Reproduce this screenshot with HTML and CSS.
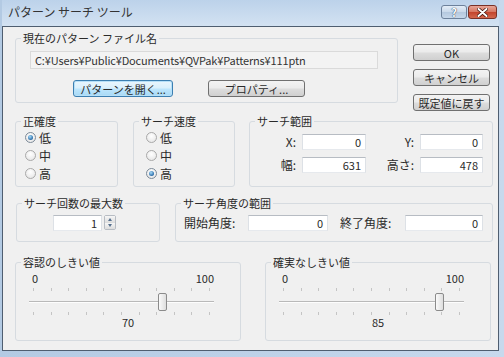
FILE: index.html
```html
<!DOCTYPE html>
<html lang="ja">
<head>
    <meta charset="UTF-8">
    <title>パターン サーチ ツール</title>
    <link rel="stylesheet" href="styles.css">
</head>
<body>

<div class="window">

    <!-- Title bar -->
    <div class="titlebar">
        <span class="title">パターン サーチ ツール</span>
        <div class="caption-buttons">
            <span class="cap-btn help">?</span>
            <span class="cap-btn close">
                <svg width="11" height="9" viewBox="0 0 11 9">
                    <path d="M1.5 1 L9.5 8 M9.5 1 L1.5 8" stroke="#3a0d05" stroke-width="3.4" stroke-linecap="round"/>
                    <path d="M1.5 1 L9.5 8 M9.5 1 L1.5 8" stroke="#fff" stroke-width="2" stroke-linecap="round"/>
                </svg>
            </span>
        </div>
    </div>

    <div class="client">

        <!-- File + dialog buttons -->
        <div class="row row-file">
            <fieldset class="group group-file">
                <legend>現在のパターン ファイル名</legend>
                <div class="path-field">C:¥Users¥Public¥Documents¥QVPak¥Patterns¥111ptn</div>
                <div class="file-buttons">
                    <button class="btn btn-default btn-open">パターンを開く...</button>
                    <button class="btn btn-props">プロパティ...</button>
                </div>
            </fieldset>
            <div class="side-buttons">
                <button class="btn">OK</button>
                <button class="btn">キャンセル</button>
                <button class="btn">既定値に戻す</button>
            </div>
        </div>

        <!-- Accuracy / speed / range -->
        <div class="row row-options">
            <fieldset class="group group-accuracy">
                <legend>正確度</legend>
                <div class="option"><span class="radio checked"></span>低</div>
                <div class="option"><span class="radio"></span>中</div>
                <div class="option"><span class="radio"></span>高</div>
            </fieldset>
            <fieldset class="group group-speed">
                <legend>サーチ速度</legend>
                <div class="option"><span class="radio"></span>低</div>
                <div class="option"><span class="radio"></span>中</div>
                <div class="option"><span class="radio checked"></span>高</div>
            </fieldset>
            <fieldset class="group group-range">
                <legend>サーチ範囲</legend>
                <div class="range-grid">
                    <span class="field-label">X:</span>
                    <span class="field">0</span>
                    <span class="field-label">Y:</span>
                    <span class="field">0</span>
                    <span class="field-label">幅:</span>
                    <span class="field">631</span>
                    <span class="field-label">高さ:</span>
                    <span class="field">478</span>
                </div>
            </fieldset>
        </div>

        <!-- Count / angle -->
        <div class="row row-count">
            <fieldset class="group group-count">
                <legend>サーチ回数の最大数</legend>
                <div class="spinner">
                    <span class="field spin-field">1</span>
                    <span class="spin-buttons">
                        <span class="spin up"></span>
                        <span class="spin down"></span>
                    </span>
                </div>
            </fieldset>
            <fieldset class="group group-angle">
                <legend>サーチ角度の範囲</legend>
                <div class="angle-row">
                    <span class="angle-label">開始角度:</span>
                    <span class="field angle-start">0</span>
                    <span class="angle-label angle-end-label">終了角度:</span>
                    <span class="field angle-end">0</span>
                </div>
            </fieldset>
        </div>

        <!-- Threshold sliders -->
        <div class="row row-sliders">
            <fieldset class="group group-slider">
                <legend>容認のしきい値</legend>
                <div class="slider-body">
                    <div class="scale"><span>0</span><span>100</span></div>
                    <div class="slider">
                        <div class="ticks ticks-top">
                            <i></i><i></i><i></i><i></i><i></i><i></i><i></i><i></i><i></i><i></i><i></i>
                        </div>
                        <div class="track"></div>
                        <div class="ticks ticks-bottom">
                            <i></i><i></i><i></i><i></i><i></i><i></i><i></i><i></i><i></i><i></i><i></i>
                        </div>
                        <div class="thumb" style="left: 70%"></div>
                    </div>
                </div>
                <div class="slider-value">70</div>
            </fieldset>
            <fieldset class="group group-slider">
                <legend>確実なしきい値</legend>
                <div class="slider-body">
                    <div class="scale"><span>0</span><span>100</span></div>
                    <div class="slider">
                        <div class="ticks ticks-top">
                            <i></i><i></i><i></i><i></i><i></i><i></i><i></i><i></i><i></i><i></i><i></i>
                        </div>
                        <div class="track"></div>
                        <div class="ticks ticks-bottom">
                            <i></i><i></i><i></i><i></i><i></i><i></i><i></i><i></i><i></i><i></i><i></i>
                        </div>
                        <div class="thumb" style="left: 85%"></div>
                    </div>
                </div>
                <div class="slider-value">85</div>
            </fieldset>
        </div>

    </div>
</div>

</body>
</html>
```

FILE: styles.css
```css
/* Vista style dialog */
body {
    margin: 0;
    font-family: "Noto Sans CJK JP", "Liberation Sans", sans-serif;
    font-size: 11px;
    color: #2a2a2a;
}
.window {
    width: 504px;
    height: 357px;
    box-sizing: border-box;
    padding: 0 5px 6px 2px;
    background: linear-gradient(to right, #b3cae3, #c7d9ed);
    display: flex;
    flex-direction: column;
}

/* Title bar */
.titlebar {
    height: 26px;
    flex: none;
    display: flex;
    justify-content: space-between;
    align-items: flex-start;
    padding: 0 2px 0 6px;
    background: linear-gradient(#bcd2ea, #d3e2f2);
}
.title {
    font-size: 12px;
    line-height: 24px;
    color: #333;
}
.caption-buttons {
    display: flex;
    gap: 1px;
    margin-top: 5px;
}
.cap-btn {
    height: 14px;
    box-sizing: border-box;
    border: 1px solid #6d819b;
    border-radius: 3px;
    display: flex;
    align-items: center;
    justify-content: center;
}
.help {
    width: 26px;
    background: linear-gradient(#e4edf7 0, #c9d8ea 50%, #b4c8de 51%, #c6d7ea);
    color: #fff;
    font-weight: bold;
    font-size: 11px;
    text-shadow: 0 0 1px #2b3f58, 0 0 1px #2b3f58;
}
.close {
    width: 29px;
    border-color: #7a3126;
    background: linear-gradient(#e7a597 0, #d6755f 50%, #c2432b 51%, #d3674d);
}

/* Client area */
.client {
    flex: 1;
    background: #f0f0f0;
    border: 1px solid #4f5e70;
    box-sizing: border-box;
    padding: 4px 0 0 12px;
}
.row {
    display: flex;
    align-items: flex-start;
}
.group {
    margin: 0;
    min-width: 0;
    box-sizing: border-box;
    border: 1px solid #d6dbe0;
    border-radius: 3px;
    padding: 0;
}
.group legend {
    margin-left: 5px;
    padding: 0 2px;
    line-height: 14px;
    font-size: 11px;
}

/* Row 1 */
.group-file {
    width: 383px;
    padding: 6px 0 5px 0;
}
.path-field {
    width: 348px;
    height: 18px;
    margin-left: 14px;
    box-sizing: border-box;
    border: 1px solid #dadada;
    background: #f3f3f3;
    padding-left: 4px;
    line-height: 16px;
    color: #333;
    letter-spacing: -0.15px;
}
.file-buttons {
    display: flex;
    gap: 35px;
    margin-top: 11px;
    padding-left: 57px;
}
.btn {
    height: 17px;
    box-sizing: border-box;
    border: 1px solid #707070;
    border-radius: 3px;
    background: linear-gradient(#f3f3f3 0, #ebebeb 48%, #dddddd 52%, #d0d0d0);
    font: inherit;
    color: #2a2a2a;
    padding: 0;
    line-height: 14px;
}
.btn-default {
    border-color: #3c7fb1;
    box-shadow: inset 0 0 0 1px #b6e0f8;
    background: linear-gradient(#eaf6fd 0, #d9f0fc 48%, #bee6fd 52%, #a7d9f5);
}
.btn-open {
    width: 100px;
}
.btn-props {
    width: 97px;
}
.side-buttons {
    display: flex;
    flex-direction: column;
    gap: 8px;
    margin: 13px 0 0 15px;
}
.side-buttons .btn {
    width: 77px;
}

/* Row 2 */
.row-options {
    margin-top: 3px;
}
.group-accuracy {
    width: 103px;
    padding-bottom: 4px;
}
.group-speed {
    width: 102px;
    margin-left: 15px;
    padding-bottom: 4px;
}
.group-accuracy .option {
    margin-left: 9px;
}
.group-speed .option {
    margin-left: 12px;
}
.option {
    height: 18px;
    display: flex;
    align-items: center;
    gap: 3px;
    font-size: 12px;
}
.radio {
    width: 11px;
    height: 11px;
    box-sizing: border-box;
    border-radius: 50%;
    border: 1px solid #a9a9a9;
    background: radial-gradient(circle at 50% 35%, #ffffff, #e2e2e2);
    position: relative;
}
.radio.checked {
    border-color: #7c8a98;
}
.radio.checked::after {
    content: "";
    position: absolute;
    inset: 2px;
    border-radius: 50%;
    background: radial-gradient(circle at 40% 35%, #a8dcfa, #2a6ca8 70%, #1b4f82);
}
.group-range {
    width: 244px;
    height: 73px;
    margin-left: 14px;
    padding-top: 5px;
}
.range-grid {
    display: grid;
    grid-template-columns: 52px 64px 54px 63px;
    row-gap: 6px;
    align-items: center;
}
.field-label {
    text-align: right;
    padding-right: 6px;
    font-size: 12px;
}
.field {
    height: 16px;
    box-sizing: border-box;
    background: #fff;
    border: 1px solid;
    border-color: #b7bcc3 #dde1e6 #e6e9ed #dde1e6;
    text-align: right;
    padding-right: 4px;
    line-height: 14px;
    font-size: 11px;
}

/* Row 3 */
.row-count {
    margin-top: 9px;
}
.group-count {
    width: 144px;
    margin-left: 1px;
    height: 46px;
    padding-top: 5px;
}
.spinner {
    display: flex;
    gap: 2px;
    margin-left: 36px;
}
.spin-field {
    width: 49px;
}
.spin-buttons {
    width: 12px;
    height: 15px;
    display: flex;
    flex-direction: column;
    border: 1px solid #b7bcc3;
    box-sizing: border-box;
    border-radius: 2px;
}
.spin {
    flex: 1;
    background: linear-gradient(#f6f6f6, #dcdcdc);
    display: flex;
    align-items: center;
    justify-content: center;
}
.spin.up::after {
    content: "";
    border: 2px solid transparent;
    border-bottom: 3px solid #56708e;
    border-top: 0;
}
.spin.down::after {
    content: "";
    border: 2px solid transparent;
    border-top: 3px solid #56708e;
    border-bottom: 0;
}
.group-angle {
    width: 318px;
    height: 46px;
    margin-left: 15px;
    padding-top: 4px;
}
.angle-row {
    display: flex;
    align-items: center;
    margin-left: 8px;
}
.angle-label {
    width: 64px;
    font-size: 12px;
}
.angle-start {
    width: 80px;
}
.angle-end-label {
    margin-left: 12px;
    width: 65px;
}
.angle-end {
    width: 78px;
}

/* Row 4 */
.row-sliders {
    margin-top: 13px;
    gap: 24px;
}
.group-slider {
    width: 226px;
    height: 86px;
    padding-top: 3px;
}
.slider-body {
    margin: 0 26px 0 13px;
}
.scale {
    display: flex;
    justify-content: space-between;
    line-height: 12px;
    padding-left: 3px;
}
.slider {
    position: relative;
    height: 31px;
}
.ticks {
    position: absolute;
    left: 4px;
    right: 4px;
    display: flex;
    justify-content: space-between;
}
.ticks i {
    width: 1px;
    height: 3px;
    background: #c4c4c4;
}
.ticks-top {
    top: 4px;
}
.ticks-bottom {
    top: 28px;
}
.track {
    position: absolute;
    left: 0;
    right: 0;
    top: 17px;
    height: 1px;
    background: #b9b9b9;
    border-bottom: 1px solid #fdfdfd;
}
.thumb {
    position: absolute;
    top: 9px;
    width: 9px;
    height: 18px;
    box-sizing: border-box;
    margin-left: -1px;
    border: 1px solid #8b8b8b;
    border-radius: 2px;
    background: linear-gradient(to right, #fafafa, #dedede);
}
.slider-value {
    text-align: center;
    line-height: 14px;
}
```
